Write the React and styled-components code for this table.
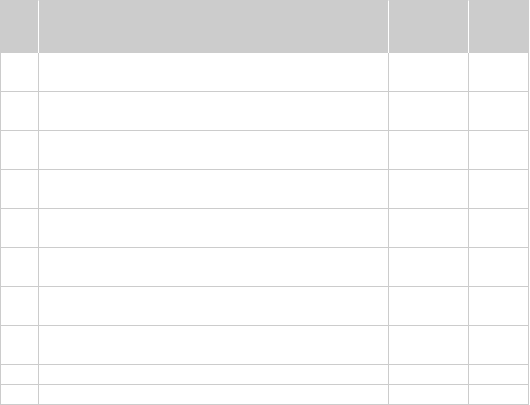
import styled, { createGlobalStyle } from "styled-components";

const GlobalStyle = createGlobalStyle`
    html, body {
        margin: 0;
        padding: 0;
        background: #fff;
        font-family: "Liberation Sans", Arial, sans-serif;
        font-size: 13px;
        color: #333;
    }
`;

const Grid = styled.table`
    border-collapse: separate;
    border-spacing: 0;
    table-layout: fixed;
    width: 529px;
`;

const HeadCell = styled.th`
    box-sizing: content-box;
    width: ${({ $width }) => $width}px;
    height: 52px;
    padding: 0;

    background-color: #cccccc;
    border-top: 1px solid #cccccc;
    border-right: 1px solid ${({ $last }) => ($last ? "#cccccc" : "#ffffff")};

    font-weight: bold;
    text-align: left;

    &:first-child {
        border-left: 1px solid #cccccc;
    }
`;

const Cell = styled.td`
    box-sizing: content-box;
    height: ${({ $short }) => ($short ? 19 : 38)}px;
    padding: 0;

    border-right: 1px solid #cccccc;
    border-bottom: 1px solid #cccccc;

    &:first-child {
        border-left: 1px solid #cccccc;
    }
`;

const columns = [37, 349, 79, 59];
const rows = [false, false, false, false, false, false, false, false, true, true];

export default function App() {
    return (
        <>
            <GlobalStyle />
            <Grid>
                <thead>
                    <tr>
                        {columns.map((w, i) => (
                            <HeadCell
                                key={i}
                                $width={w}
                                $last={i === columns.length - 1}
                            />
                        ))}
                    </tr>
                </thead>
                <tbody>
                    {rows.map((short, r) => (
                        <tr key={r}>
                            {columns.map((_, c) => (
                                <Cell key={c} $short={short} />
                            ))}
                        </tr>
                    ))}
                </tbody>
            </Grid>
        </>
    );
}
